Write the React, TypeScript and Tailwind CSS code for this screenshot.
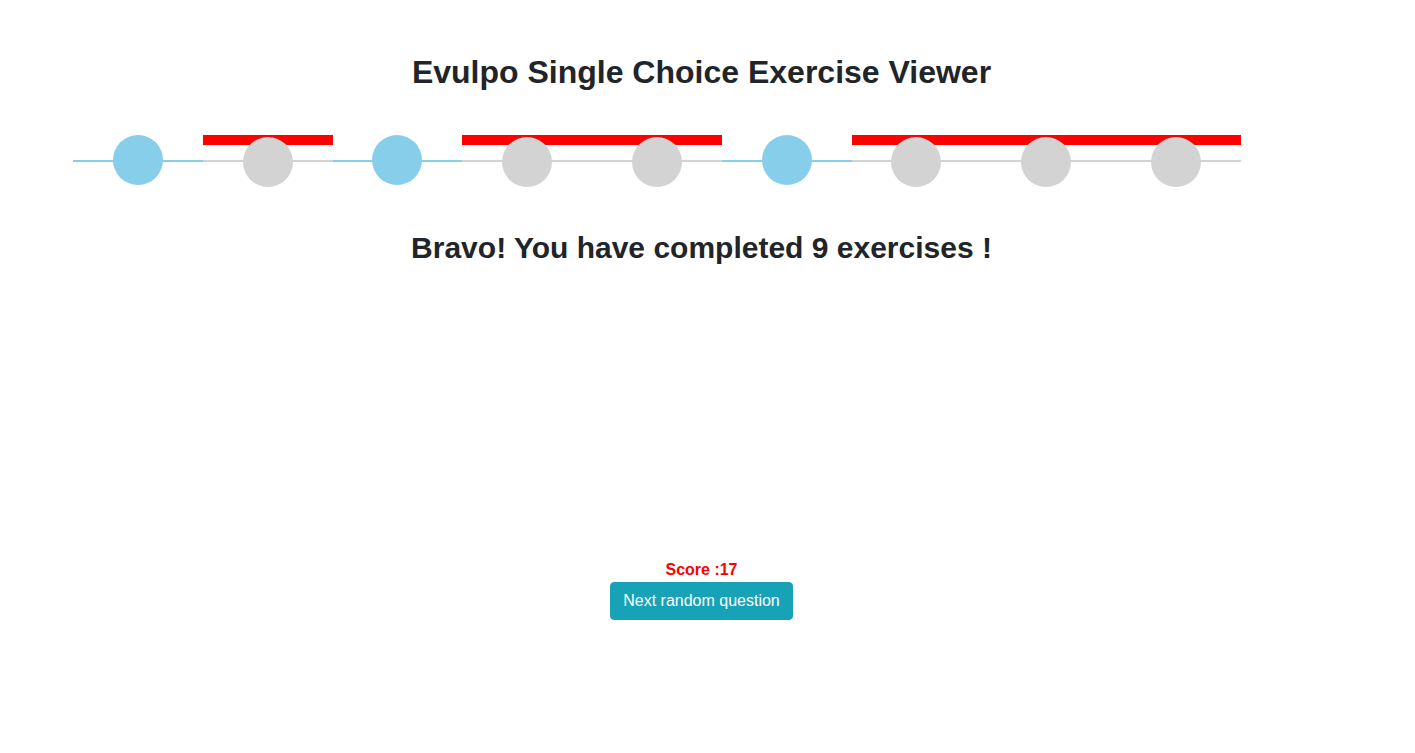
import React from "react";

type Step = { done: boolean; wrong: boolean };

const steps: Step[] = [
  { done: true, wrong: false },
  { done: false, wrong: true },
  { done: true, wrong: false },
  { done: false, wrong: true },
  { done: false, wrong: true },
  { done: true, wrong: false },
  { done: false, wrong: true },
  { done: false, wrong: true },
  { done: false, wrong: true },
];

const StepItem: React.FC<{ step: Step }> = ({ step }) => (
  <div className="relative h-[52px]">
    {step.wrong && <div className="absolute left-0 right-0 top-0 h-[10px] bg-[#ff0000]" />}
    <div
      className={`absolute left-0 right-0 top-[25px] h-[2px] ${step.done ? "bg-[#87ceeb]" : "bg-[#d3d3d3]"}`}
    />
    <div
      className={`absolute left-1/2 -translate-x-1/2 w-[50px] h-[50px] rounded-full ${
        step.done ? "top-0 bg-[#87ceeb]" : "top-[2px] bg-[#d3d3d3]"
      }`}
    />
  </div>
);

export default function App() {
  return (
    <div className="w-[1403px] min-h-[753px] bg-white text-[#212529] font-['Liberation_Sans',Arial,sans-serif]">
      <h2 className="pt-[53px] text-center text-[32px] font-bold leading-[1.2]">
        Evulpo Single Choice Exercise Viewer
      </h2>
      <div className="mt-[43.6px] ml-[73px] w-[1167.75px] grid grid-cols-9">
        {steps.map((s, i) => (
          <StepItem key={i} step={s} />
        ))}
      </div>
      <h3 className="mt-[43.4px] text-center text-[30px] font-bold leading-[1.2]">
        Bravo! You have completed 9 exercises !
      </h3>
      <div className="mt-[292px] flex flex-col items-center">
        <p className="text-base leading-6 font-bold text-[#ff0000]">Score :17</p>
        <button className="bg-[#17a2b8] border border-[#17a2b8] text-white text-base leading-6 px-3 py-1.5 rounded">
          Next random question
        </button>
      </div>
    </div>
  );
}
